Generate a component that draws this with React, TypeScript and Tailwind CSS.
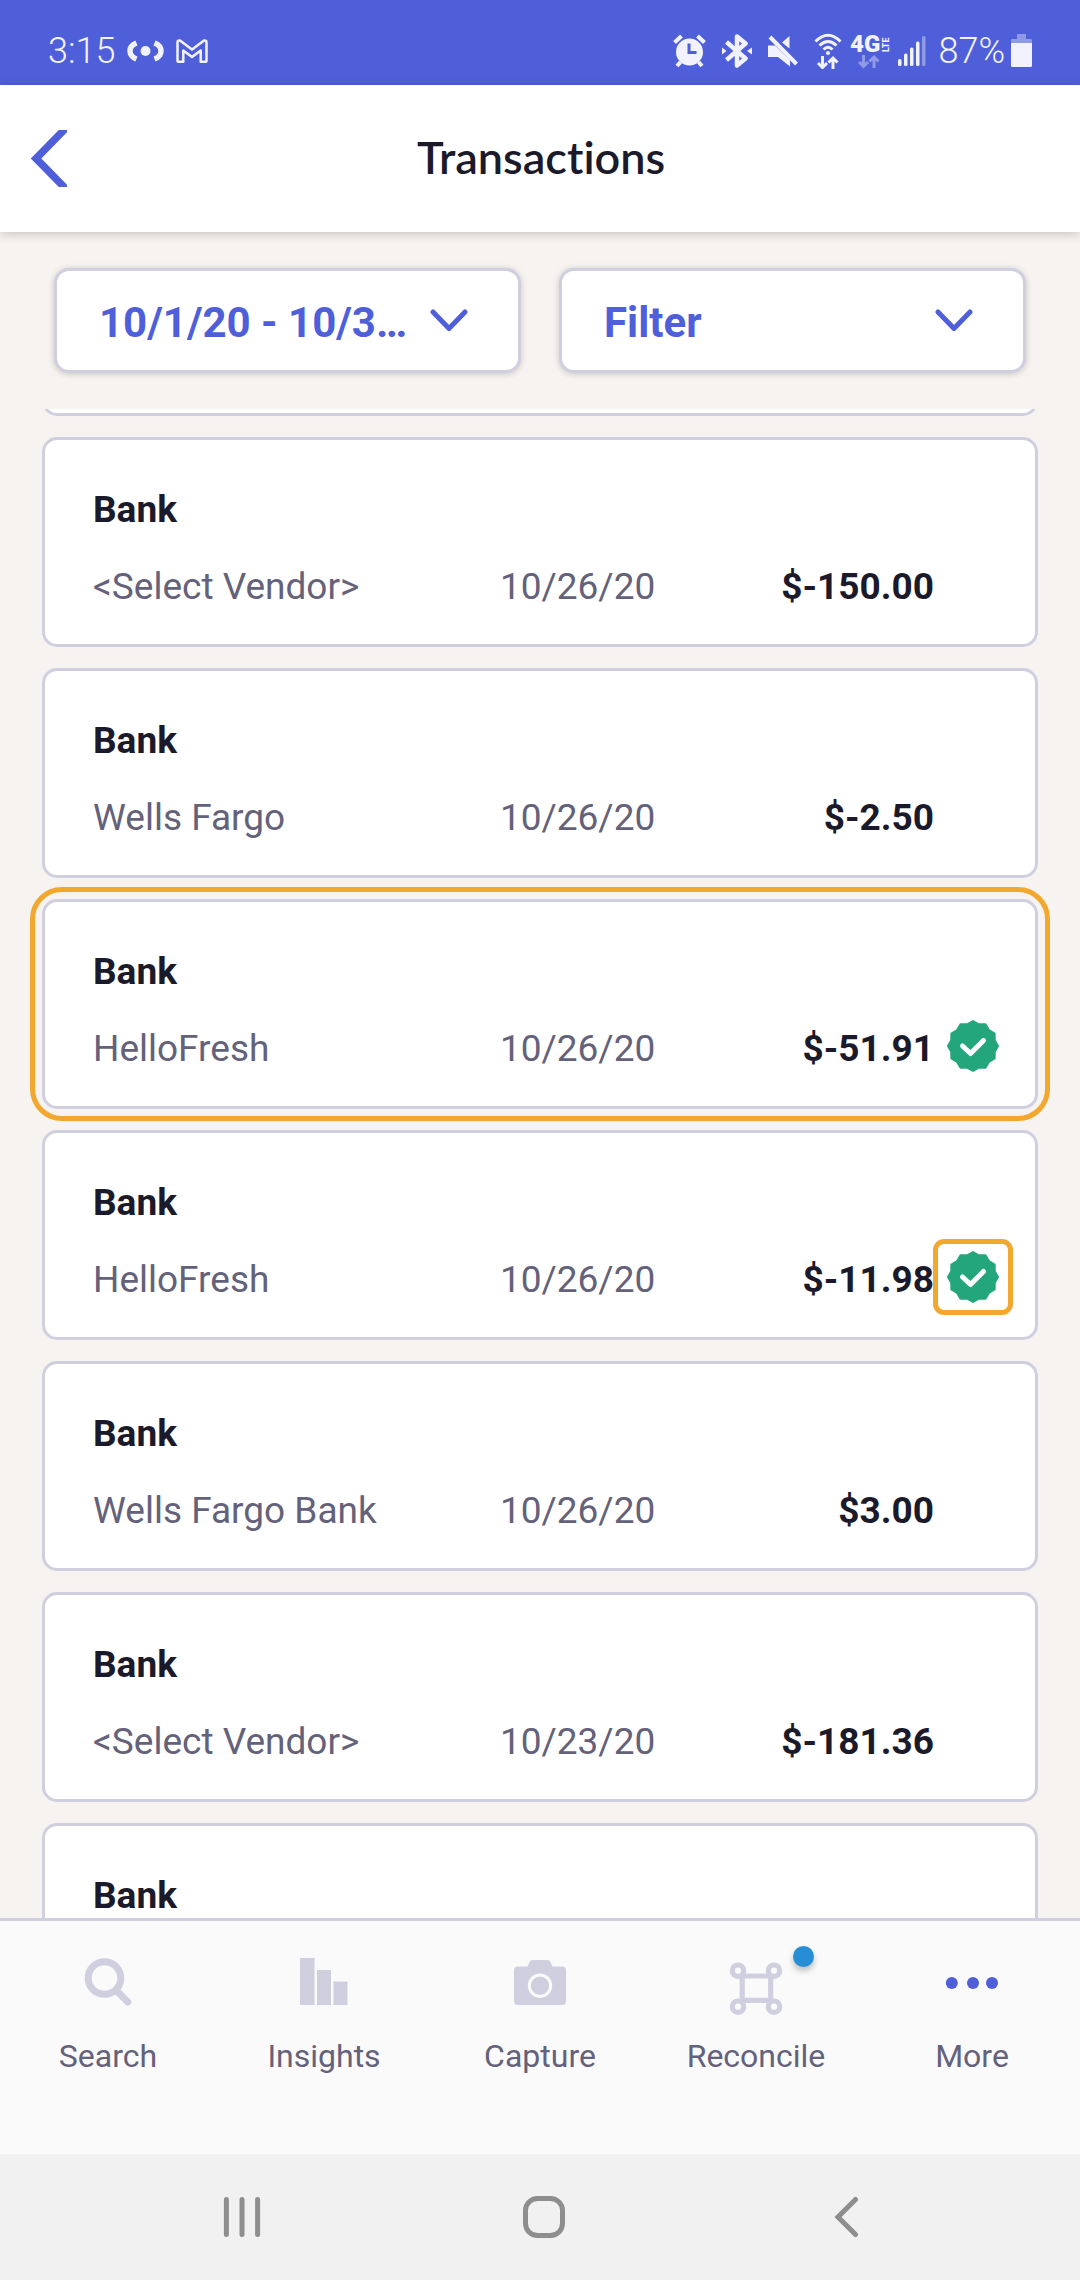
import React, { useState } from 'react';

type Transaction = {
  id: number;
  source: string;
  vendor?: string;
  date?: string;
  amount?: string;
  reconciled?: boolean;
  highlight?: 'card' | 'badge';
};

const transactions: Transaction[] = [
  { id: 1, source: 'Bank', vendor: '<Select Vendor>', date: '10/26/20', amount: '$-150.00' },
  { id: 2, source: 'Bank', vendor: 'Wells Fargo', date: '10/26/20', amount: '$-2.50' },
  { id: 3, source: 'Bank', vendor: 'HelloFresh', date: '10/26/20', amount: '$-51.91', reconciled: true, highlight: 'card' },
  { id: 4, source: 'Bank', vendor: 'HelloFresh', date: '10/26/20', amount: '$-11.98', reconciled: true, highlight: 'badge' },
  { id: 5, source: 'Bank', vendor: 'Wells Fargo Bank', date: '10/26/20', amount: '$3.00' },
  { id: 6, source: 'Bank', vendor: '<Select Vendor>', date: '10/23/20', amount: '$-181.36' },
  { id: 7, source: 'Bank' },
];

// twelve-pointed seal, radius 26 at the tips
const sealPoints = Array.from({ length: 24 }, (_, i) => {
  const r = i % 2 === 0 ? 25 : 22.5;
  const a = (i * Math.PI) / 12;
  return `${(26 + r * Math.sin(a)).toFixed(2)},${(26 - r * Math.cos(a)).toFixed(2)}`;
}).join(' ');

const VerifiedBadge = () => (
  <svg className="size-[52px] text-[#24a67c]" viewBox="0 0 52 52" role="img" aria-label="Reconciled">
    <polygon points={sealPoints} fill="currentColor" stroke="currentColor" strokeWidth="2" strokeLinejoin="round" />
    <path d="M15.500 26l8 7.500L36.500 20.500" fill="none" stroke="white" strokeWidth="5" strokeLinecap="round" strokeLinejoin="round" />
  </svg>
);

const DataArrows = ({ x, y }: { x: number; y: number }) => (
  <g transform={`translate(${x} ${y})`} fill="none" stroke="currentColor" strokeWidth="3">
    <path d="M5.500 0v11M1 7l4.500 4.500L10 7" />
    <path d="M16 13V2M11.500 6.500L16 2l4.500 4.500" />
  </g>
);

const StatusBar = () => (
  <div className="flex h-[85px] shrink-0 items-center justify-between bg-[#4f5fd9] pt-4 pr-12 pl-12 text-[#f1f2fd]">
    <div className="flex items-center gap-3">
      <span className="text-[36px] leading-[40px] font-light">3:15</span>
      <svg className="h-[22px] w-[37px]" viewBox="0 0 37 22" fill="none" stroke="currentColor">
        <circle cx="18.500" cy="11" r="5" fill="currentColor" stroke="none" />
        <path d="M9.500 3Q3 5.500 3 11t6.500 8M27.500 3Q34 5.500 34 11t-6.500 8" strokeWidth="5.500" />
      </svg>
      <svg className="h-[24px] w-[32px]" viewBox="0 0 32 24" fill="none" stroke="currentColor" strokeWidth="2.500" strokeLinejoin="round">
        <path d="M1.500 3.500Q1.500 1 4 1.500L16 10.500 28 1.500q2.500-.5 2.500 2V22q0 .8-.8.8h-5V11.500L16 18 7.300 11.500V22.800h-5q-.8 0-.8-.8z" />
      </svg>
    </div>
    <div className="flex items-center">
      <svg className="h-[34px] w-[33px]" viewBox="0 0 33 34" fill="none" stroke="currentColor">
        <circle cx="16.500" cy="18" r="13.500" fill="currentColor" stroke="none" />
        <path d="M1.500 8.500L8.500 2M24.500 2l7 6.500" strokeWidth="4" />
        <path d="M7.500 28l-3.500 4M25.500 28l3.500 4" strokeWidth="4" />
        <path d="M16 9.500v9h7.500" stroke="#4f5fd9" strokeWidth="3" />
      </svg>
      <svg className="ml-4 h-[34px] w-[30px]" viewBox="0 0 30 34" fill="none" stroke="currentColor">
        <path d="M4.500 8l19 16.500-8.500 7V2.500l8.500 7L4.500 26" strokeWidth="4.500" strokeLinejoin="round" />
        <path d="M0 13.500L4.500 17 0 20.500zM30 13.500L25 17l5 3.500z" fill="currentColor" stroke="none" />
      </svg>
      <svg className="ml-4 h-[32px] w-[30px]" viewBox="0 0 30 32">
        <path d="M0 10.500h7L22 25v6.500L10 22H0zM21.500 1v12.500L14 7.500z" fill="currentColor" />
        <path d="M2 2l26.500 27" stroke="currentColor" strokeWidth="4" />
      </svg>
      <svg className="ml-4 h-[36px] w-[28px]" viewBox="0 0 28 36" fill="none">
        <path d="M1.500 8.500Q14-4 26.500 8.500M5.500 12.500q8.500-8 17 0M9.500 16.500q4.500-4.500 9 0" stroke="currentColor" strokeWidth="3" />
        <circle cx="14" cy="20" r="2" fill="currentColor" />
        <DataArrows x={3} y={23} />
      </svg>
      <svg className="ml-2 h-[36px] w-[40px] overflow-visible" viewBox="0 0 40 36" fill="currentColor">
        <text x="0" y="19" fontFamily="Roboto, sans-serif" fontWeight="900" fontSize="24">4G</text>
        <text transform="translate(39 19) rotate(-90)" fontFamily="Roboto, sans-serif" fontWeight="700" fontSize="9">LTE</text>
        <g opacity=".4">
          <DataArrows x={8} y={22} />
        </g>
      </svg>
      <svg className="ml-2 h-[30px] w-[28px]" viewBox="0 0 28 30" fill="currentColor">
        <rect x="0" y="23" width="3.500" height="7" rx="1.500" />
        <rect x="6" y="17.500" width="3.500" height="12.500" rx="1.500" />
        <rect x="12" y="11.500" width="3.500" height="18.500" rx="1.500" />
        <rect x="18" y="5.500" width="3.500" height="24.500" rx="1.500" />
        <rect x="24" y="0" width="3.500" height="30" rx="1.500" opacity=".4" />
      </svg>
      <span className="ml-3 text-[36px] leading-[40px] font-light">87%</span>
      <svg className="ml-1.5 h-[34px] w-[21px]" viewBox="0 0 21 34" fill="currentColor">
        <path d="M6 0h9v5h5q1 0 1 1v3H0V6q0-1 1-1h5z" opacity=".4" />
        <path d="M0 9h21v22.500q0 1.500-1.500 1.500h-18Q0 33 0 31.500z" />
      </svg>
    </div>
  </div>
);

const Header = () => (
  <header className="relative z-10 flex h-[147px] shrink-0 items-center bg-white px-[31px] shadow-[0_2px_10px_rgba(0,0,0,0.2)]">
    <button type="button" aria-label="Back" className="text-[#4f5fd9]">
      <svg className="h-[57px] w-[36px]" viewBox="0 0 36 57" fill="none">
        <path d="M35.500-2.500L5 28.500l30.500 31" stroke="currentColor" strokeWidth="7.500" />
      </svg>
    </button>
    <h1 className="flex-1 pr-[34px] pb-1 text-center font-[Lato] text-[45px] leading-[56px] font-semibold text-[#1b1a2b] [font-variant-ligatures:none]">Transactions</h1>
  </header>
);

type PickerProps = {
  label: string;
  options: string[];
};

const Picker = ({ label, options }: PickerProps) => {
  const [value, setValue] = useState(options[0]);

  return (
    <div className="relative flex-1">
      <select
        aria-label={label}
        value={value}
        onChange={(e) => setValue(e.target.value)}
        className="block h-[105px] w-full appearance-none rounded-[15px] border-[3px] border-[#cfcfdf] bg-white pt-[3px] pr-24 pl-[42px] text-[42px] font-bold text-[#4f5fd9] shadow-[0_1px_6px_rgba(0,0,0,0.2)]"
      >
        {options.map((option) => (
          <option key={option}>{option}</option>
        ))}
      </select>
      <svg className="pointer-events-none absolute top-[41px] right-[53px] h-[24px] w-[38px] text-[#4f5fd9]" viewBox="0 0 38 24" fill="none">
        <path d="M3 3l16 16.500L35 3" stroke="currentColor" strokeWidth="5" strokeLinecap="round" strokeLinejoin="round" />
      </svg>
    </div>
  );
};

const TransactionCard = ({ item }: { item: Transaction }) => (
  <li className="relative h-[210px] shrink-0 rounded-[15px] border-[3px] border-[#cfcfdf] bg-white pt-[50px] pr-[36px] pl-12 text-[37px] leading-[40px]">
    <h2 className="font-bold text-[#1b1a2b]">{item.source}</h2>
    {item.vendor && (
      <div className="mt-7 flex h-[52px] items-center gap-[13px]">
        <div className="grid flex-1 grid-cols-[15fr_8fr_8fr] pt-1.5 text-[#64627a]">
          <span>{item.vendor}</span>
          <span>{item.date}</span>
          <span className="text-right font-bold text-[#1b1a2b]">{item.amount}</span>
        </div>
        <div className="relative size-[52px]">
          {item.reconciled && <VerifiedBadge />}
          {item.highlight === 'badge' && (
            <div className="absolute -inset-x-[14px] -inset-y-[12px] rounded-[11px] border-[5px] border-[#f2a82f]" />
          )}
        </div>
      </div>
    )}
    {item.highlight === 'card' && (
      <div className="absolute -inset-[15px] rounded-[32px] border-[5px] border-[#f2a82f]" />
    )}
  </li>
);

const SearchIcon = () => (
  <svg className="h-[60px] w-[54px]" viewBox="0 0 54 60" fill="none" stroke="currentColor" strokeWidth="7" strokeLinecap="round">
    <circle cx="23.500" cy="22" r="16.300" />
    <path d="M36 35l10.800 11" />
  </svg>
);

const InsightsIcon = () => (
  <svg className="h-[60px] w-[54px]" viewBox="0 0 54 60" fill="currentColor">
    <path d="M3 2h14.500v47H3zM20 14h14v35H20zM36.500 25.500h14V49h-14z" />
  </svg>
);

const CaptureIcon = () => (
  <svg className="h-[60px] w-[54px]" viewBox="0 0 54 60" fill="currentColor">
    <path d="M5 10.500h9.500l2-4.500q1-2 3-2h15q2 0 3 2l2 4.500H49q4 0 4 4V45q0 4-4 4H5q-4 0-4-4V14.500q0-4 4-4z" />
    <circle cx="27" cy="29.700" r="10.700" fill="none" stroke="#fafafa" strokeWidth="3" />
  </svg>
);

const ReconcileIcon = () => (
  <svg className="h-[60px] w-[54px]" viewBox="0 0 54 60" fill="none" stroke="currentColor" strokeWidth="5.200">
    <path d="M13.200 20h28.500v24.300H13.200z" />
    <g fill="#fafafa">
      <circle cx="9" cy="14.700" r="5.700" />
      <circle cx="45" cy="14.700" r="5.700" />
      <circle cx="9" cy="50.700" r="5.700" />
      <circle cx="45" cy="50.700" r="5.700" />
    </g>
  </svg>
);

const MoreIcon = () => (
  <svg className="h-[60px] w-[54px] text-[#4f5fd9]" viewBox="0 0 54 60" fill="currentColor">
    <circle cx="6.800" cy="27" r="6" />
    <circle cx="28" cy="27" r="6" />
    <circle cx="47" cy="27" r="6" />
  </svg>
);

const tabs = [
  { label: 'Search', Icon: SearchIcon },
  { label: 'Insights', Icon: InsightsIcon },
  { label: 'Capture', Icon: CaptureIcon },
  { label: 'Reconcile', Icon: ReconcileIcon, notify: true },
  { label: 'More', Icon: MoreIcon },
];

const TabBar = () => (
  <nav className="flex h-[236px] shrink-0 border-t-[3px] border-[#cfcfdf] bg-[#fafafa] pt-[35px]">
    {tabs.map(({ label, Icon, notify }) => (
      <a key={label} href={`#${label.toLowerCase()}`} className="flex flex-1 flex-col items-center gap-5 text-[32px] leading-[40px] text-[#64627a]">
        <span className="relative text-[#cfcfdf]">
          <Icon />
          {notify && (
            <span className="absolute -top-[10px] -right-[31px] size-[21px] rounded-full bg-[#278ed6] shadow-[0_4px_6px_rgba(0,0,0,0.25)]" />
          )}
        </span>
        {label}
      </a>
    ))}
  </nav>
);

const SystemBar = () => (
  <div className="flex h-[126px] shrink-0 items-center justify-center gap-[260px] bg-[#f1f1f1] pl-2 text-[#8e8e8e]">
    <button type="button" aria-label="Recent apps">
      <svg className="size-[42px]" viewBox="0 0 42 42" fill="none" stroke="currentColor" strokeWidth="5" strokeLinecap="round">
        <path d="M5.400 3.500v35M21 3.500v35M36.600 3.500v35" />
      </svg>
    </button>
    <button type="button" aria-label="Home">
      <svg className="size-[42px]" viewBox="0 0 42 42" fill="none" stroke="currentColor" strokeWidth="5">
        <rect x="2.500" y="2.500" width="37" height="37" rx="12" />
      </svg>
    </button>
    <button type="button" aria-label="Go back">
      <svg className="size-[42px]" viewBox="0 0 42 42" fill="none" stroke="currentColor" strokeWidth="5" strokeLinecap="round">
        <path d="M30.500 3.500L13 21l17.500 17.500" />
      </svg>
    </button>
  </div>
);

const App = () => {
  return (
    <div className="flex h-screen flex-col overflow-hidden bg-[#f7f3f0] font-[Roboto,sans-serif]">
      <StatusBar />
      <Header />

      <div className="flex shrink-0 gap-[38px] px-[54px] py-9">
        <Picker label="Date range" options={['10/1/20 - 10/3…']} />
        <Picker label="Filter" options={['Filter']} />
      </div>

      <main className="min-h-0 flex-1 overflow-hidden px-[42px]">
        <ul className="flex flex-col gap-[21px]">
          {/* tail of the card scrolled under the filters */}
          <li aria-hidden="true" className="-mt-[33px] h-10 shrink-0 rounded-[15px] border-[3px] border-[#cfcfdf] bg-white" />
          {transactions.map((item) => (
            <TransactionCard key={item.id} item={item} />
          ))}
        </ul>
      </main>

      <TabBar />
      <SystemBar />
    </div>
  );
};

export default App;
